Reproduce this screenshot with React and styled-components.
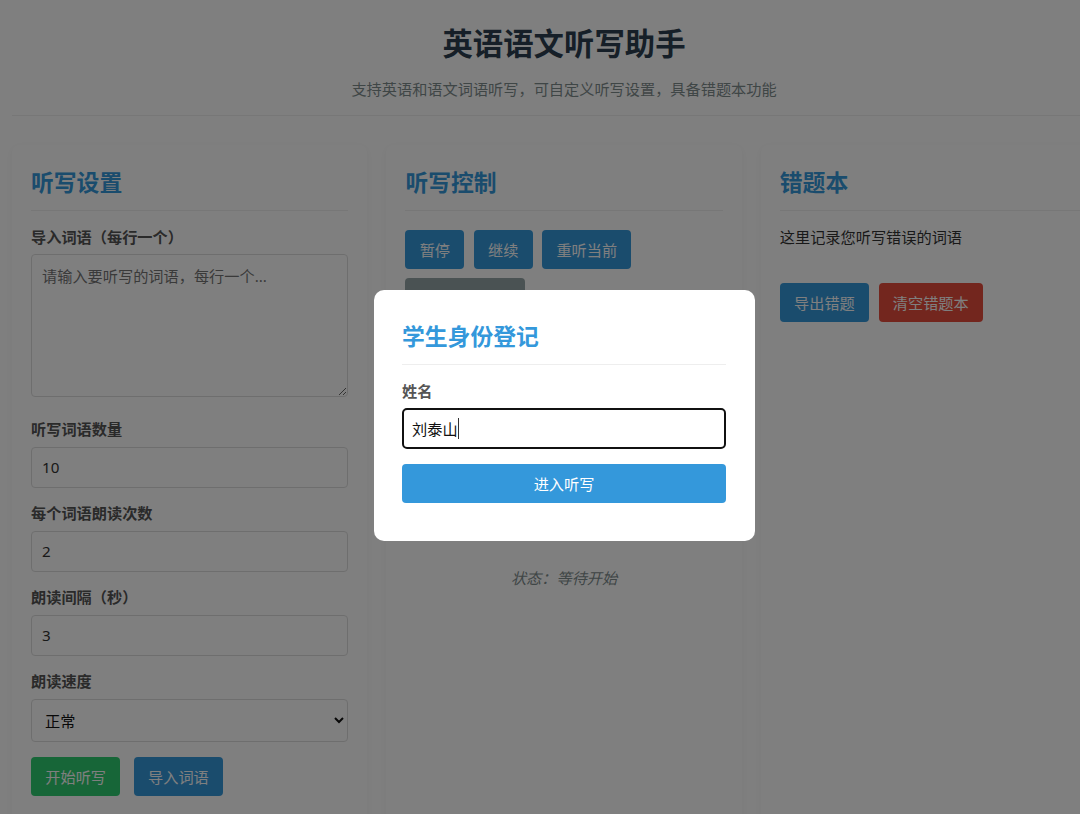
import React, { useState } from 'react';
import styled, { createGlobalStyle } from 'styled-components';

const GlobalStyle = createGlobalStyle`
    * {
        box-sizing: border-box;
    }

    html, body {
        margin: 0;
        height: 814px;
        overflow: hidden;
        background: #fff;
    }

    body, input, textarea, select, button {
        font-family: "Noto Sans", "Noto Sans CJK SC", sans-serif;
    }
`;

const Page = styled.div`
    width: 1128px;
    height: 814px;
    padding: 0 12px;
    overflow: hidden;
    color: #333;
`;

const Header = styled.header`
    height: 116px;
    padding-top: 22px;
    text-align: center;
    border-bottom: 1px solid #eee;
`;

const Title = styled.h1`
    margin: 0;
    font-size: 30.4px;
    line-height: 44px;
    font-weight: 700;
    color: #2c3e50;
`;

const Subtitle = styled.p`
    margin: 12px 0 0;
    font-size: 15.2px;
    line-height: 22px;
    color: #7f8c8d;
`;

const Columns = styled.main`
    display: grid;
    grid-template-columns: repeat(3, 355.4px);
    gap: 19px;
    margin-top: 29px;
`;

const Card = styled.section`
    height: 700px;
    padding: 19px;
    background: #fff;
    border-radius: 8px;
    box-shadow: 0 2px 10px rgba(0, 0, 0, 0.05);
`;

const CardTitle = styled.h2`
    margin: 0 0 ${(p) => p.$gap || 15}px;
    height: 47px;
    font-size: 22.8px;
    line-height: 38px;
    font-weight: 700;
    color: #3498db;
    border-bottom: 1px solid #eee;
`;

const Field = styled.div`
    margin-bottom: ${(p) => p.$gap || 15}px;
`;

const Label = styled.label`
    display: block;
    height: 24px;
    margin-bottom: 4px;
    font-size: 15.2px;
    line-height: 21px;
    font-weight: 700;
    color: #555;
`;

const TextAreaLabel = styled(Label)`
    height: 23px;
`;

const ModalLabel = styled(Label)`
    line-height: 22px;
`;

const TextArea = styled.textarea`
    display: block;
    width: 100%;
    height: 143px;
    padding: 10px;
    font-size: 15.2px;
    line-height: 22px;
    color: #333;
    background: #fff;
    border: 1px solid #ddd;
    border-radius: 4px;
    outline: none;

    &::placeholder {
        color: #757575;
    }
`;

const NumberInput = styled.input`
    display: block;
    width: 100%;
    height: 41px;
    padding: 0 10px 2px;
    font-size: 15.2px;
    color: #333;
    background: #fff;
    border: 1px solid #ddd;
    border-radius: 4px;
    outline: none;
`;

const Select = styled.select`
    display: block;
    width: 100%;
    height: 43px;
    padding: 0 9px;
    font-size: 15.2px;
    color: #111;
    background: #fff;
    border: 1px solid #ddd;
    border-radius: 4px;
    outline: none;
`;

const ButtonRow = styled.div`
    display: flex;
    flex-wrap: wrap;
    row-gap: 9px;
    column-gap: ${(p) => p.$gap || 9.5}px;
`;

const ACTION_COLORS = {
    blue: '#3498db',
    green: '#2ecc71',
    red: '#e74c3c',
    gray: '#95a5a6',
};

const Action = styled.button`
    height: 39px;
    padding: 0 14.25px 2px;
    font-size: 15.2px;
    color: #fff;
    background: ${(p) => ACTION_COLORS[p.$color || 'blue']};
    border: none;
    border-radius: 4px;
    cursor: pointer;
`;

const WordStage = styled.div`
    height: 249px;
`;

const Status = styled.p`
    margin: 0;
    font-size: 15.2px;
    line-height: 24px;
    font-style: italic;
    text-align: center;
    color: #7f8c8d;
`;

const Note = styled.p`
    margin: 0 0 34px;
    font-size: 15.2px;
    line-height: 24px;
    color: #333;
`;

const Overlay = styled.div`
    position: fixed;
    top: 0;
    left: 0;
    width: 1128px;
    height: 831px;
    display: flex;
    align-items: center;
    justify-content: center;
    background: rgba(0, 0, 0, 0.5);
`;

const Modal = styled.form`
    width: 381px;
    height: 251px;
    padding: 28px 28.5px;
    background: #fff;
    border-radius: 10px;
`;

const ModalTitle = styled.h3`
    margin: 0 0 15px;
    height: 47px;
    font-size: 22.8px;
    line-height: 38px;
    font-weight: 700;
    color: #3498db;
    border-bottom: 1px solid #eee;
`;

const NameWrap = styled.div`
    position: relative;
    margin-bottom: 15px;
`;

const NameInput = styled.input`
    display: block;
    width: 100%;
    height: 41px;
    padding: 0 8px 1px;
    font-size: 15.2px;
    color: #111;
    background: #fff;
    border: 2px solid #111;
    border-radius: 5px;
    outline: none;
`;

const Caret = styled.span`
    position: absolute;
    top: 10px;
    left: 56px;
    width: 1px;
    height: 21px;
    background: #333;
`;

const SubmitButton = styled.button`
    display: block;
    width: 100%;
    height: 39px;
    padding-bottom: 2px;
    font-size: 15.2px;
    color: #fff;
    background: #3498db;
    border: none;
    border-radius: 4px;
    cursor: pointer;
`;

const App = () => {
    const [name, setName] = useState('刘泰山');

    return (
        <Page>
            <GlobalStyle />
            <Header>
                <Title>英语语文听写助手</Title>
                <Subtitle>支持英语和语文词语听写，可自定义听写设置，具备错题本功能</Subtitle>
            </Header>
            <Columns>
                <Card>
                    <CardTitle $gap={16}>听写设置</CardTitle>
                    <Field $gap={22}>
                        <TextAreaLabel htmlFor="words">导入词语（每行一个）</TextAreaLabel>
                        <TextArea id="words" placeholder="请输入要听写的词语，每行一个..." />
                    </Field>
                    <Field>
                        <Label htmlFor="count">听写词语数量</Label>
                        <NumberInput id="count" type="number" defaultValue="10" />
                    </Field>
                    <Field>
                        <Label htmlFor="repeat">每个词语朗读次数</Label>
                        <NumberInput id="repeat" type="number" defaultValue="2" />
                    </Field>
                    <Field>
                        <Label htmlFor="interval">朗读间隔（秒）</Label>
                        <NumberInput id="interval" type="number" defaultValue="3" />
                    </Field>
                    <Field>
                        <Label htmlFor="speed">朗读速度</Label>
                        <Select id="speed" defaultValue="normal">
                            <option value="slow">较慢</option>
                            <option value="normal">正常</option>
                            <option value="fast">较快</option>
                        </Select>
                    </Field>
                    <ButtonRow $gap={13.5}>
                        <Action $color="green">开始听写</Action>
                        <Action>导入词语</Action>
                    </ButtonRow>
                </Card>
                <Card>
                    <CardTitle $gap={19}>听写控制</CardTitle>
                    <ButtonRow>
                        <Action>暂停</Action>
                        <Action>继续</Action>
                        <Action>重听当前</Action>
                        <Action $color="gray">显示当前词语</Action>
                    </ButtonRow>
                    <WordStage />
                    <Status>状态：等待开始</Status>
                </Card>
                <Card>
                    <CardTitle $gap={14}>错题本</CardTitle>
                    <Note>这里记录您听写错误的词语</Note>
                    <ButtonRow>
                        <Action>导出错题</Action>
                        <Action $color="red">清空错题本</Action>
                    </ButtonRow>
                </Card>
            </Columns>
            <Overlay>
                <Modal onSubmit={(e) => e.preventDefault()}>
                    <ModalTitle>学生身份登记</ModalTitle>
                    <ModalLabel htmlFor="student">姓名</ModalLabel>
                    <NameWrap>
                        <NameInput id="student" value={name} onChange={(e) => setName(e.target.value)} />
                        <Caret />
                    </NameWrap>
                    <SubmitButton type="submit">进入听写</SubmitButton>
                </Modal>
            </Overlay>
        </Page>
    );
};

export default App;
